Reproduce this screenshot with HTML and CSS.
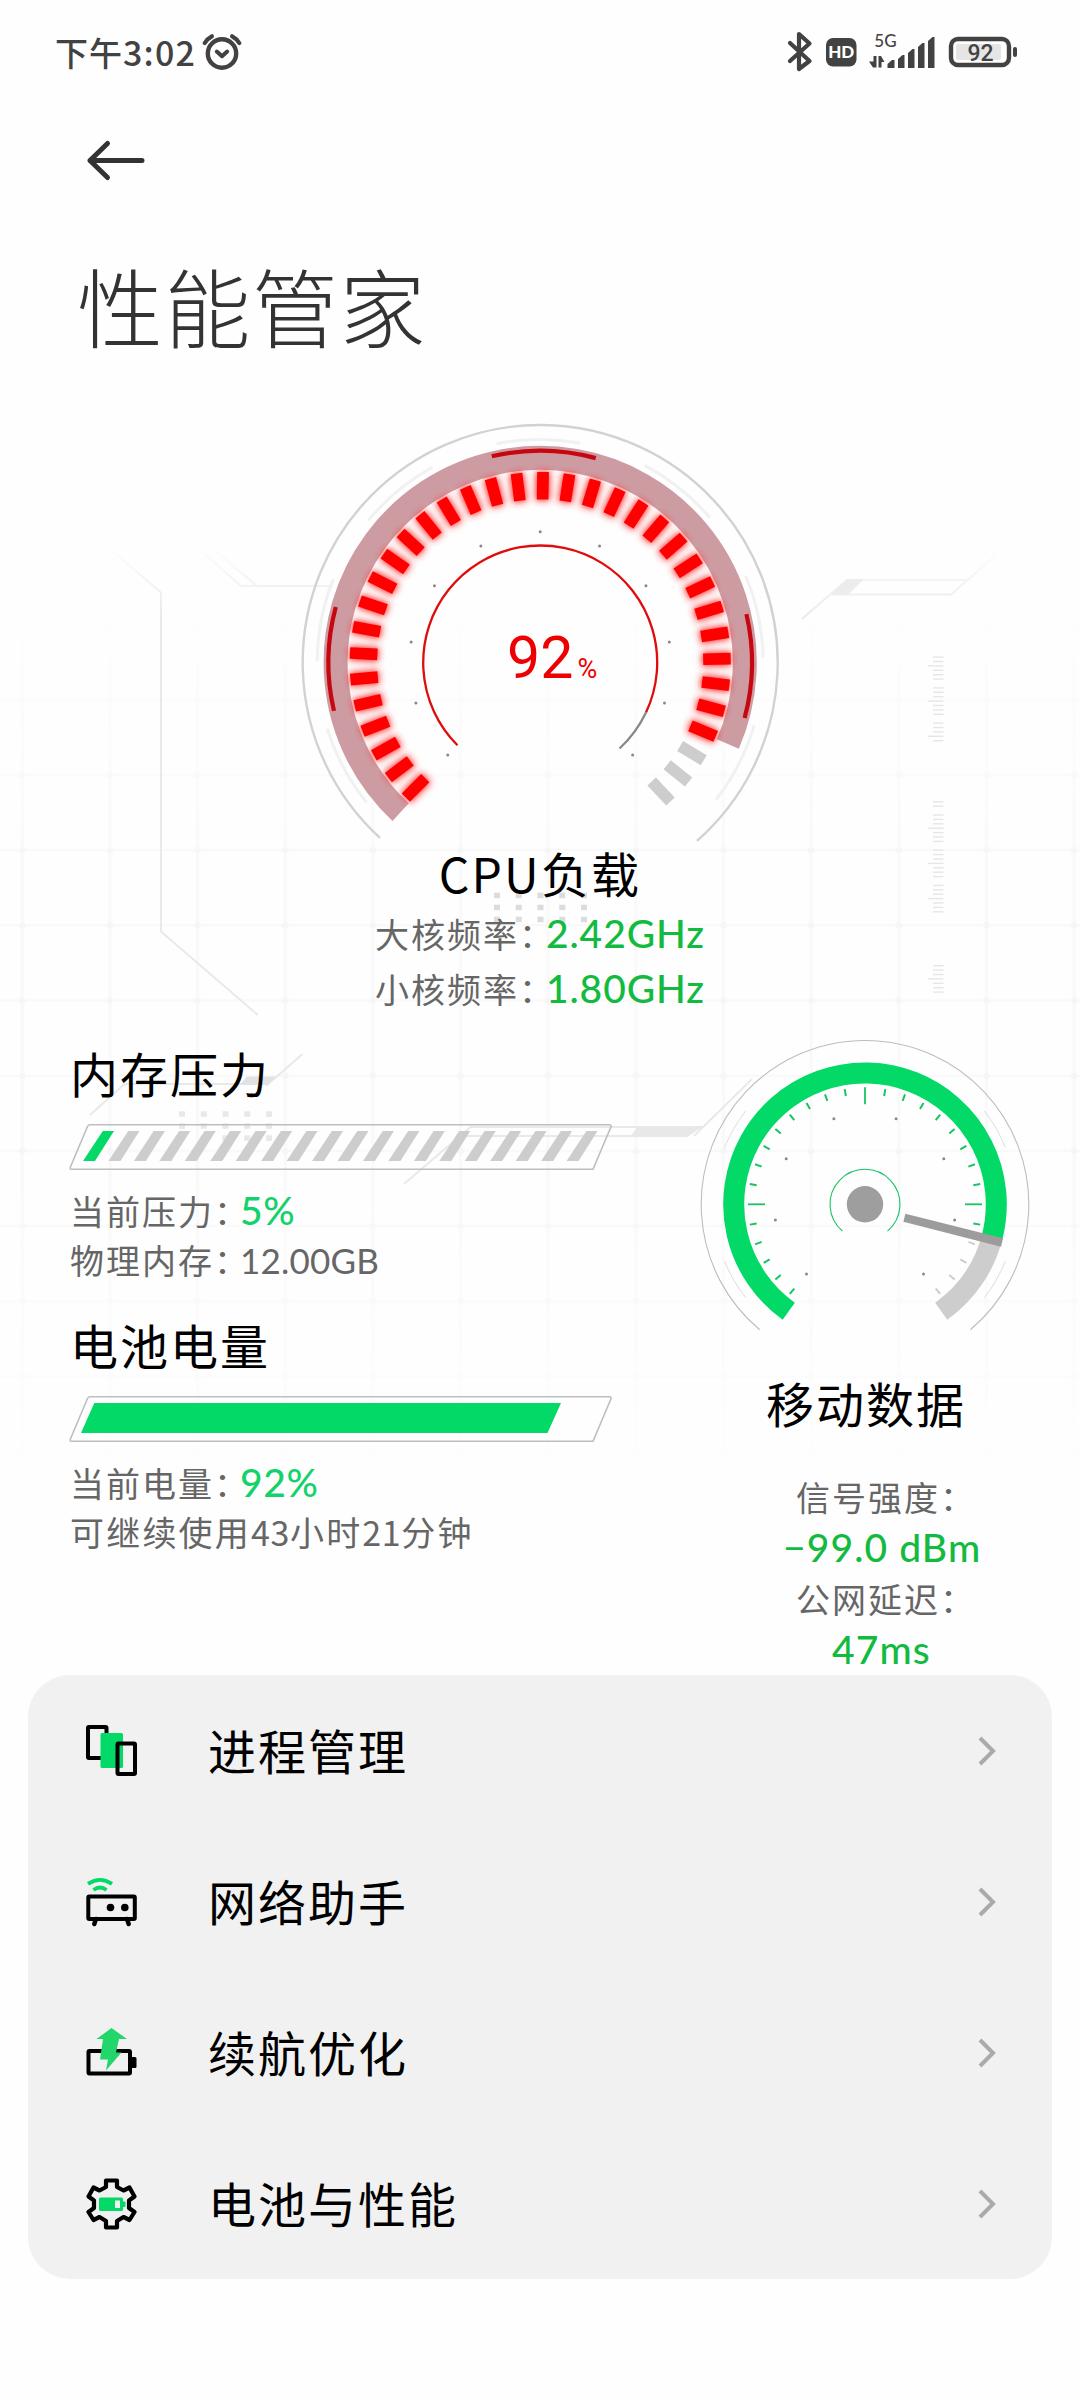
FILE: index.html
```html
<!DOCTYPE html>
<html lang="zh-CN">
<head>
<meta charset="utf-8">
<title>性能管家</title>
<link rel="stylesheet" href="styles.css">
</head>
<body>
<div class="screen">
  <svg class="backdrop" id="backdrop" width="1080" height="1600" viewBox="0 0 1080 1600">
    <defs>
      <linearGradient id="gridFade" gradientUnits="userSpaceOnUse" x1="0" y1="600" x2="0" y2="1480">
        <stop offset="0" stop-color="#fff" stop-opacity="0"/>
        <stop offset=".3" stop-color="#fff" stop-opacity="1"/>
        <stop offset=".65" stop-color="#fff" stop-opacity="1"/>
        <stop offset="1" stop-color="#fff" stop-opacity="0"/>
      </linearGradient>
      <linearGradient id="lineFade" gradientUnits="userSpaceOnUse" x1="0" y1="545" x2="0" y2="620">
        <stop offset="0" stop-color="#e9e9e9" stop-opacity="0"/>
        <stop offset="1" stop-color="#e9e9e9"/>
      </linearGradient>
      <mask id="gridMask"><rect width="1080" height="1600" fill="url(#gridFade)"/></mask>
    </defs>
    <g id="grid" mask="url(#gridMask)" stroke="#f9f9f9" stroke-width="3" fill="#f6f6f6"></g>
    <g fill="none" stroke="url(#lineFade)" stroke-width="2">
      <path d="M110 549 161 592.500V931.500L257.700 1015"/>
      <path d="M199 549 241 586H333M213 549 257 586"/>
      <path d="M802 619 846.700 580H966M831 594.500H951L996 555"/>
    </g>
    <path d="M847 579H864L848 595H831Z" fill="#ececec"/>
    <g id="rulers" stroke="#e6e6e6" stroke-width="1.400"></g>
    <g fill="none" stroke="#e9e9e9" stroke-width="2">
      <path d="M90 1115 124.500 1084H256M266 1086 302.500 1054"/>
      <path d="M404 1184 470.500 1127H640M459 1136H636M694 1136 752 1079"/>
    </g>
    <path d="M247 1076.500H276L268 1085H240Z" fill="#e2e2e2"/>
    <path d="M638 1126H704L687 1137H630Z" fill="#e8e8e8"/>
    <g id="dots"></g>
  </svg>

  <header class="status">
    <div class="status-left">
      <span class="clock">下午<b>3:02</b></span>
      <svg width="40" height="38" viewBox="0 0 40 38" fill="none" stroke="#424242" stroke-linecap="round">
        <circle cx="20" cy="20.500" r="14.200" stroke-width="4.400"/>
        <path d="M14.800 18.500 20 23.200 25.200 18.500" stroke-width="4" stroke-linejoin="round"/>
        <path d="M2.800 10Q5.500 5.500 9.800 3.300M37.200 10Q34.500 5.500 30.200 3.300" stroke-width="4.200"/>
      </svg>
    </div>
    <svg class="status-right" width="232" height="44" viewBox="786 30 232 44">
      <path d="M790 43 809.500 61 799 69V34L809.500 43.500 790 61" fill="none" stroke="#424242" stroke-width="4.200" stroke-linecap="round" stroke-linejoin="round"/>
      <rect x="826" y="38" width="30.500" height="28.500" rx="7" fill="#424242"/>
      <text class="hd" x="841.200" y="58">HD</text>
      <text class="net" x="885.500" y="47">5G</text>
      <g fill="#424242">
        <path d="M873.500 56h3v11.500h-3.500l-4-6h4.500zM878.500 67.500v-11.500h2.500l3.500 6h-3v5.500z"/>
        <path d="M887.500 68v-4l4.500-4h2.500v8zM898 68V59l4.500-4h2v13zM908 68V53l4.500-4h2v19zM918 68V47l4.500-4h2v25zM928 68V41l4.500-4h2v31z"/>
        <rect x="1013" y="47" width="4" height="10" rx="2"/>
      </g>
      <rect x="951" y="39" width="58" height="26" rx="7" fill="none" stroke="#424242" stroke-width="4.400"/>
      <rect x="956" y="44" width="45" height="16" rx="2" fill="#e5e5e5"/>
      <text class="batt" x="980.500" y="61">92</text>
    </svg>
  </header>

  <nav class="nav">
    <svg width="60" height="44" viewBox="0 0 60 44" fill="none" stroke="#333" stroke-width="5" stroke-linecap="round" stroke-linejoin="round"><path d="M56 22.500H4M21.500 5.500 4 22.500 21.500 39.500"/></svg>
  </nav>
  <h1 class="title">性能管家</h1>

  <section class="cpu">
    <svg id="cpuGauge" width="500" height="430" viewBox="290 417 500 430">
      <defs>
        <filter id="glow" x="-20%" y="-20%" width="140%" height="140%">
          <feGaussianBlur stdDeviation="3.500"/>
        </filter>
      </defs>
      <text class="load" x="507" y="678">92</text>
      <text class="load-unit" x="577.500" y="677.500">%</text>
    </svg>
    <h2 class="name cpu-name">CPU负载</h2>
    <p class="freq"><span class="label">大核频率：</span><span class="green">2.42GHz</span></p>
    <p class="freq"><span class="label">小核频率：</span><span class="green">1.80GHz</span></p>
  </section>

  <section class="panels">
    <div class="left">
      <div class="stat">
        <h2 class="name">内存压力</h2>
        <svg id="memBar" width="546" height="49" viewBox="68 1122 546 49">
          <path d="M90 1124.700H609.500Q611.500 1124.700 611 1126.700L593 1169.300H71.500Q69.500 1169.300 70.400 1167L87.500 1126.500Q88.300 1124.700 90 1124.700Z" fill="none" stroke="#bebebe" stroke-width="1.600"/>
        </svg>
        <p class="line first"><span class="label">当前压力：</span><span class="mint">5%</span></p>
        <p class="line"><span class="label">物理内存：</span><span class="plain">12.00GB</span></p>
      </div>
      <div class="stat">
        <h2 class="name">电池电量</h2>
        <svg width="546" height="49" viewBox="68 1122 546 49">
          <path d="M90 1124.700H609.500Q611.500 1124.700 611 1126.700L593 1169.300H71.500Q69.500 1169.300 70.400 1167L87.500 1126.500Q88.300 1124.700 90 1124.700Z" fill="none" stroke="#bebebe" stroke-width="1.600"/>
          <path d="M94.300 1131H561L547.500 1161H81Z" fill="#02d967"/>
        </svg>
        <p class="line first"><span class="label">当前电量：</span><span class="mint">92%</span></p>
        <p class="line"><span class="label wide">可继续使用<i>43</i>小时<i>21</i>分钟</span></p>
      </div>
    </div>
    <div class="right">
      <svg id="netGauge" width="340" height="300" viewBox="695.300 1036 340 300"></svg>
      <h2 class="name">移动数据</h2>
      <p class="net-label">信号强度：</p>
      <p class="net-value v1">−99.0 dBm</p>
      <p class="net-label">公网延迟：</p>
      <p class="net-value v2">47ms</p>
    </div>
  </section>

  <ul class="menu">
    <li>
      <svg class="ico" width="52" height="52" viewBox="0 0 52 52">
        <rect x="2" y="2" width="18.500" height="31" rx="1" fill="none" stroke="#000" stroke-width="4"/>
        <rect x="14.500" y="8" width="22.500" height="35" rx="1.500" fill="#02d967"/>
        <rect x="31.500" y="18.500" width="17.500" height="30.500" rx="1" fill="none" stroke="#000" stroke-width="4"/>
      </svg>
      <span>进程管理</span>
      <svg class="chev" width="22" height="34" viewBox="0 0 22 34"><path d="M4 4 17 17 4 30"/></svg>
    </li>
    <li>
      <svg class="ico" width="52" height="52" viewBox="0 0 52 52">
        <rect x="2.300" y="20.500" width="46.500" height="22.500" rx="1" fill="none" stroke="#000" stroke-width="4"/>
        <circle cx="24.500" cy="31.500" r="3.800"/><circle cx="38.800" cy="31.500" r="3.800"/>
        <path d="M10 43 8.300 48M41 43 42.700 48" stroke="#000" stroke-width="4.500" stroke-linecap="round"/>
        <path d="M2 7.800Q14 0 26 7.800M7.500 14Q14 9 20.500 14" fill="none" stroke="#02d967" stroke-width="3.800"/>
      </svg>
      <span>网络助手</span>
      <svg class="chev" width="22" height="34" viewBox="0 0 22 34"><path d="M4 4 17 17 4 30"/></svg>
    </li>
    <li>
      <svg class="ico" width="52" height="52" viewBox="0 0 52 52">
        <rect x="2.500" y="24" width="41.500" height="22.500" rx="1" fill="none" stroke="#000" stroke-width="4"/>
        <rect x="44" y="30" width="6.500" height="11" rx="1.500"/>
        <path d="M25.500 1 41 12H33L30 25.500H35.500L20 43.500 22 32.500H14L17 12H10.500Z" fill="#23d66c"/>
      </svg>
      <span>续航优化</span>
      <svg class="chev" width="22" height="34" viewBox="0 0 22 34"><path d="M4 4 17 17 4 30"/></svg>
    </li>
    <li>
      <svg class="ico" width="52" height="52" viewBox="0 0 52 52">
        <path d="M20 2.500H31V9L37.500 12.500 43.500 9.500 48.500 18.500 43 22.500V30L48.500 34 43.500 42 37.500 39 31 43V49.500H20V43L13.500 39 7.500 42 2.500 34 8 30V22.500L2.500 18.500 7.500 9.500 13.500 12.500 20 9Z" fill="none" stroke="#000" stroke-width="4.200" stroke-linejoin="round"/>
        <rect x="13" y="19.500" width="24" height="13.500" rx="1.500" fill="#02d967"/>
        <rect x="36.500" y="23.500" width="3" height="5.500" rx="1" fill="#02d967"/>
        <rect x="29" y="22.500" width="5" height="7.500" fill="#f1f1f1"/>
      </svg>
      <span>电池与性能</span>
      <svg class="chev" width="22" height="34" viewBox="0 0 22 34"><path d="M4 4 17 17 4 30"/></svg>
    </li>
  </ul>
</div>
<script src="script.js"></script>
</body>
</html>
```
FILE: styles.css
```css
* { box-sizing: border-box; }
body { margin: 0; background: #fefefe; }
h1, h2, p, ul { margin: 0; padding: 0; font-weight: 400; }
svg { display: block; flex: none; }

.screen {
  position: relative;
  width: 1080px;
  height: 2400px;
  overflow: hidden;
  color: #000;
  font-family: "Noto Sans CJK SC", sans-serif;
  white-space: nowrap;
}
.backdrop { position: absolute; left: 0; top: 0; z-index: -1; }

.status {
  display: flex;
  justify-content: space-between;
  align-items: center;
  height: 104px;
  padding: 0 62px 0 55px;
}
.status-left { display: flex; align-items: center; gap: 6px; }
.clock { font-size: 33px; letter-spacing: 1px; font-weight: 500; line-height: 44px; color: #424242; width: 141px; }
.clock b { font-weight: 500; font-size: 34px; letter-spacing: 1.2px; }
.status-right text { fill: #424242; font-family: "Lato", sans-serif; text-anchor: middle; }
.status-right .hd { fill: #fff; font-size: 17px; font-weight: 900; }
.status-right .net { font-size: 17px; font-weight: 500; }
.status-right .batt { font-family: Roboto, sans-serif; font-size: 23px; font-weight: 500; }

.nav { height: 112px; padding: 34px 0 0 86px; }
.title {
  height: 190px;
  padding: 39px 0 0 77px;
  font-size: 86px;
  line-height: 100px;
  letter-spacing: 1.5px;
  font-weight: 300;
  color: #333;
}

.cpu { height: 610px; padding-top: 11px; display: flex; flex-direction: column; align-items: center; }
.load, .load-unit { fill: #ee0000; font-family: Roboto, sans-serif; }
.load { font-size: 59px; }
.load-unit { font-size: 27px; }
.name { font-size: 48px; line-height: 56px; letter-spacing: 2px; }
.cpu-name { margin: -3px 0 6px; letter-spacing: 2.2px; }
.freq { display: flex; align-items: baseline; width: 330px; height: 55px; line-height: 55px; }
.label {
  width: 171px;
  font-size: 34px;
  letter-spacing: 2px;
  color: #666;
  font-feature-settings: "halt";
}
.green { font-family: Lato, sans-serif; font-weight: 500; font-size: 39px; letter-spacing: 0.9px; color: #12bb40; }

.panels { display: flex; justify-content: space-between; height: 659px; padding: 18px 0 0 68px; }
.left { width: 560px; }
.stat { height: 272px; }
.left { padding-top: 10px; }
.stat .name { padding-left: 2px; height: 78px; }
.stat { height: 272px; }
.line { display: flex; align-items: baseline; height: 49px; line-height: 49px; padding-left: 2px; }
.first { margin-top: 15px; }
.line .label { width: 170px; }
.line .wide { width: auto; letter-spacing: 2.2px; }
.mint { font-family: Lato, sans-serif; font-weight: 500; font-size: 39px; letter-spacing: 0.6px; color: #14d26b; }
.plain { font-family: Lato, sans-serif; font-size: 35px; letter-spacing: 0.2px; color: #666; }
.label i { font-style: normal; letter-spacing: 0.6px; }

.right { width: 385px; padding-top: 2px; display: flex; flex-direction: column; }
.right .name { margin: 38px 0 0 71px; height: 98px; }
.net-label {
  height: 51px;
  padding-left: 101px;
  font-size: 34px;
  line-height: 51px;
  letter-spacing: 2px;
  color: #666;
  font-feature-settings: "halt";
}
.net-value {
  height: 51px;
  padding-left: 88px;
  font-family: Lato, sans-serif;
  font-size: 39px;
  font-weight: 500;
  line-height: 51px;
  letter-spacing: 1.1px;
  color: #12bb40;
}
.net-value.v2 { padding-left: 137px; }

.menu {
  list-style: none;
  width: 1024px;
  height: 604px;
  margin-left: 28px;
  border-radius: 42px;
  background: #f1f1f1;
}
.menu li { display: flex; align-items: center; height: 151px; padding: 0 54px 0 58px; }
.menu span { flex: 1; padding: 0 0 3px 70px; font-size: 48px; letter-spacing: 2px; line-height: 60px; }
.chev { fill: none; stroke: #aaa; stroke-width: 4; }
```
FILE: script.js
```js
const NS = 'http://www.w3.org/2000/svg';

function add(parent, tag, attrs) {
  const el = document.createElementNS(NS, tag);
  for (const key in attrs) el.setAttribute(key, attrs[key]);
  parent.appendChild(el);
  return el;
}

// Angles are measured clockwise from twelve o'clock.
function polar(c, r, deg) {
  const a = deg * Math.PI / 180;
  return [c[0] + r * Math.sin(a), c[1] - r * Math.cos(a)];
}

function arc(parent, c, r, from, to, color, width) {
  const p = polar(c, r, from), q = polar(c, r, to);
  const large = to - from > 180 ? 1 : 0;
  add(parent, 'path', {
    d: `M${p}A${r} ${r} 0 ${large} 1 ${q}`, fill: 'none', stroke: color, 'stroke-width': width
  });
}

function tick(parent, c, r1, r2, deg, color, width) {
  const p = polar(c, r1, deg), q = polar(c, r2, deg);
  add(parent, 'line', { x1: p[0], y1: p[1], x2: q[0], y2: q[1], stroke: color, 'stroke-width': width });
}

function dot(parent, c, r, deg) {
  const p = polar(c, r, deg);
  add(parent, 'circle', { cx: p[0], cy: p[1], r: 1.5, fill: '#888' });
}

// CPU gauge
const cpu = document.getElementById('cpuGauge');
const C = [540.2, 662.5];
arc(cpu, C, 237.5, -137.6, 138.7, '#d2d2d2', 2.4);
for (let i = -3; i <= 3; i++) {
  const mid = i * 39.2 - 0.5;
  arc(cpu, C, 223, mid - 10.8, mid + 10.8, '#f1f1f1', 3);
}
arc(cpu, C, 204.6, -137, 113.5, '#cd9ca3', 24);
[-89, 1, 91].forEach(a => arc(cpu, C, 211.8, a - 14.2, a + 14.2, '#c70610', 4.2));
const glow = add(cpu, 'g', { filter: 'url(#glow)' });
const bars = add(cpu, 'g', {});
for (let i = -17; i <= 17; i++) {
  const a = 0.85 + i * 8, lit = i <= 14;
  if (lit) tick(glow, C, 162, 191, a, '#ff2a2a', 14);
  tick(bars, C, 163, 190.5, a, lit ? '#ff0000' : '#cdcdcd', 11.7);
}
arc(cpu, C, 117, -135, 115.3, '#e00c0c', 2.3);
arc(cpu, C, 117, 115.3, 137.3, '#888', 2.3);
for (let i = -5; i <= 5; i++) dot(cpu, C, 130.7, i * 27);

// Memory stripes
const mem = document.getElementById('memBar');
for (let i = 0; i < 20; i++) {
  const x = i * 25.45;
  add(mem, 'polygon', {
    points: `${102.8 + x},1131 ${114 + x},1131 ${95 + x},1161 ${83 + x},1161`,
    fill: i === 0 ? '#02d967' : '#cdcdcd'
  });
}

// Mobile data gauge
const net = document.getElementById('netGauge');
const N = [865.3, 1204.3];
arc(net, N, 163.8, -140, 140, '#bdbdbd', 1.1);
[-60, 60, -120, 120].forEach(a => arc(net, N, 151.5, a - 8, a + 8, '#ddd', 1));
arc(net, N, 131.3, 104, 144.5, '#cdcdcd', 21);
arc(net, N, 131.3, -144.5, 104.5, '#02d967', 21);
for (let i = -14; i <= 14; i++) {
  const big = i % 9 === 0;
  tick(net, N, big ? 100 : 110, 117, i * 10, i > 10 ? '#cdcdcd' : '#16c464', big ? 1.8 : 2);
}
[20, 60, 100, 140].forEach(a => { dot(net, N, 91, a); dot(net, N, 91, -a); });
arc(net, N, 35, -140, 140, '#16c464', 1.1);
add(net, 'circle', { cx: N[0], cy: N[1], r: 18.2, fill: '#9e9e9e' });
add(net, 'polygon', { points: '905.7,1213.7 903.7,1221.7 1001.3,1246.7 1003.3,1238.3', fill: '#9c9c9c' });

// Background grid
const grid = document.getElementById('grid');
for (let i = 0; i < 13; i++) {
  const x = 22.3 + i * 87.65;
  add(grid, 'line', { x1: x, y1: 600, x2: x + 0.01, y2: 1480 });
}
for (let j = 0; j < 12; j++) {
  const y = 624.5 + j * 75.2;
  add(grid, 'line', { x1: 0, y1: y, x2: 1080.5, y2: y + 0.01, 'stroke-width': 2.5 });
  for (let i = 0; i < 13; i++) add(grid, 'circle', { cx: 22.3 + i * 87.65, cy: y, r: 3.2, stroke: 'none' });
}

// Vertical rulers
const rulers = document.getElementById('rulers');
[[657.1, 20, 2], [801.8, 26, 6], [965.7, 7, 3]].forEach(([y0, n, long]) => {
  for (let i = 0; i < n; i++) {
    const phase = (i - long + 16) % 8;
    if (phase === 4) continue;
    const y = y0 + i * 4.4;
    add(rulers, 'line', { x1: phase === 0 ? 928 : 933, x2: 943.5, y1: y, y2: y });
  }
});

// Dot clusters
const dots = document.getElementById('dots');
[[497, 895.7, '#dcdcdc'], [182, 1114.3, '#e8e8e8']].forEach(([x0, y0, fill]) => {
  for (let r = 0; r < 3; r++)
    for (let c = 0; c < 5; c++)
      add(dots, 'rect', { x: x0 + c * 21.75 - 3, y: y0 + r * 12 - 3, width: 6, height: 5.5, fill });
});
```
